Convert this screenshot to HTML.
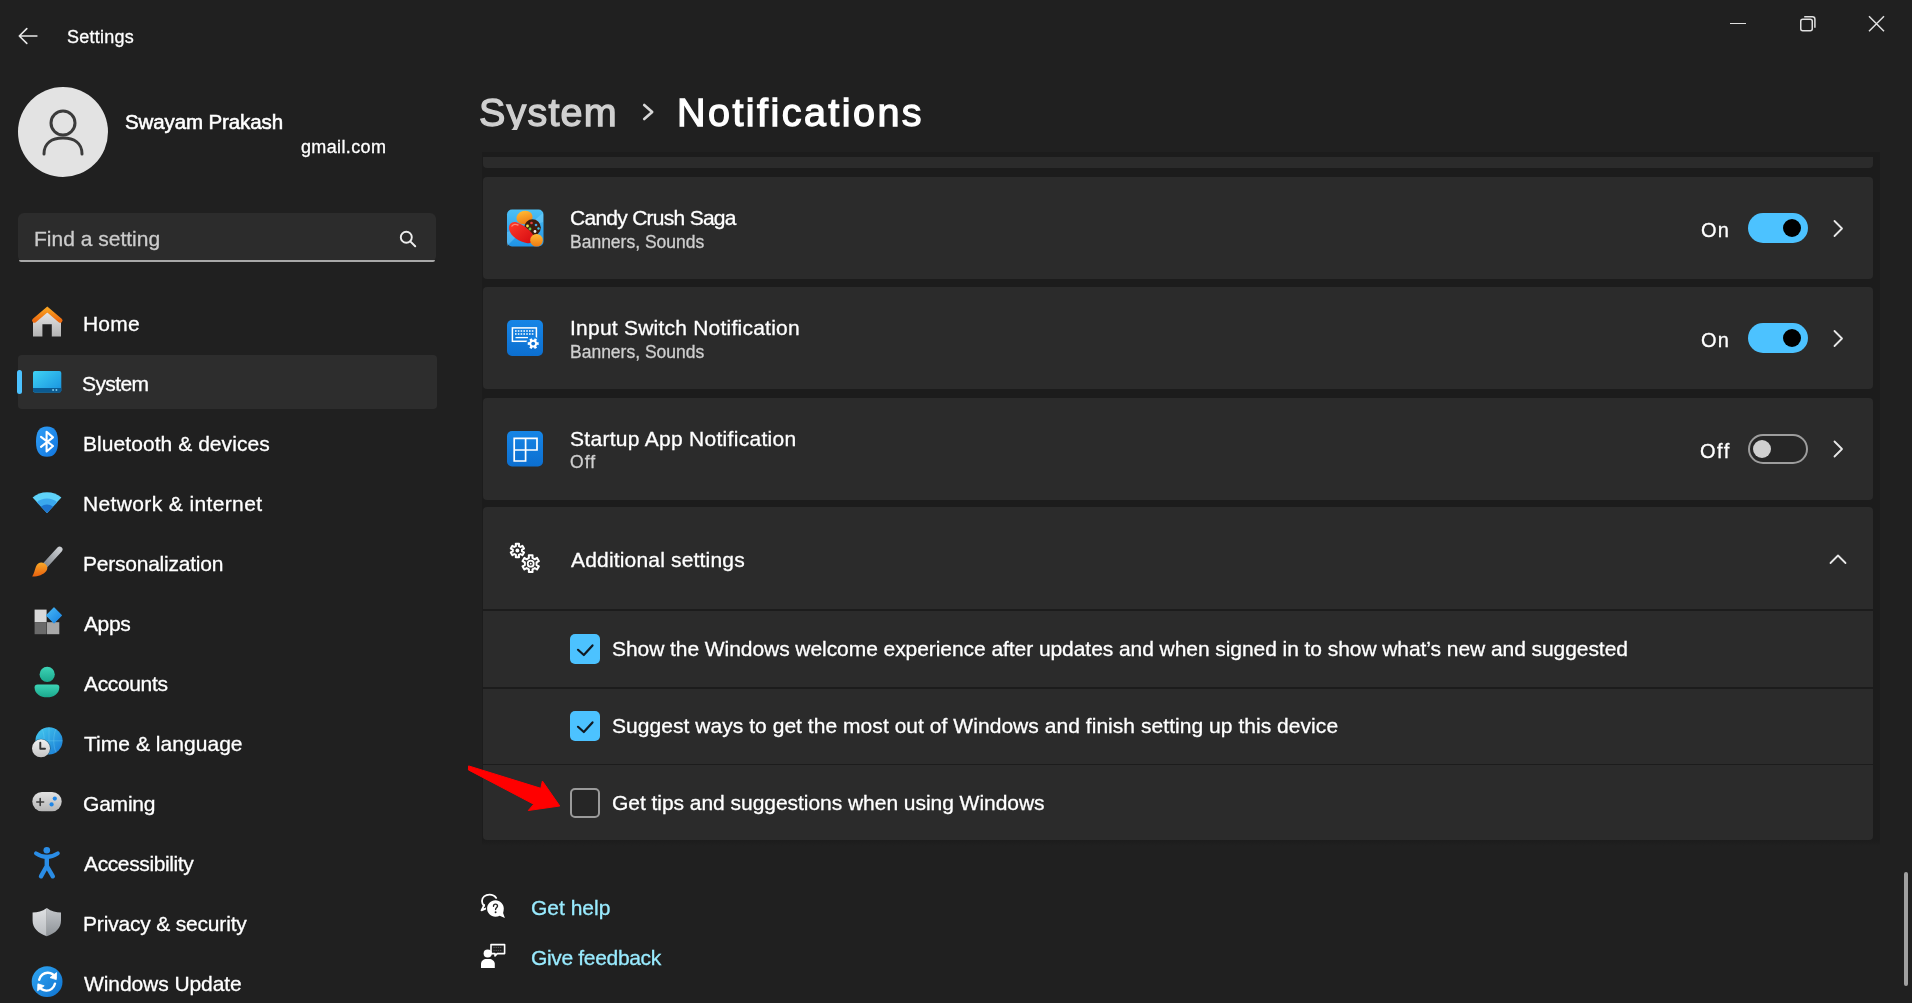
<!DOCTYPE html>
<html><head><meta charset="utf-8"><title>Settings</title>
<style>
html,body{margin:0;padding:0;}
body{width:1912px;height:1003px;overflow:hidden;background:#202020;position:relative;font-family:"Liberation Sans", sans-serif;}
.t{position:absolute;white-space:nowrap;line-height:1;will-change:transform;}
.r{position:absolute;}
</style></head><body>
<svg class="r" style="left:15px;top:24px;" width="26" height="24" viewBox="0 0 26 24"><path d="M4.3 12 H21.9 M4.3 12 L11.8 4.6 M4.3 12 L11.8 19.4" stroke="#e8e8e8" stroke-width="1.6" fill="none" stroke-linecap="round" stroke-linejoin="round"/></svg>
<div class="t" style="left:66.50px;top:27.76px;font-size:18px;color:#ffffff;letter-spacing:0.230px;-webkit-text-stroke:0.3px #ffffff;">Settings</div>
<div class="r" style="left:1730.4px;top:22.6px;width:16px;height:1.5px;background:#e0e0e0;"></div>
<svg class="r" style="left:1796px;top:12px;" width="24" height="24" viewBox="0 0 24 24"><rect x="4.75" y="7.25" width="11.5" height="11.5" rx="2" stroke="#e0e0e0" stroke-width="1.5" fill="none"/><path d="M8.2 4.8 H16.4 Q18.9 4.8 18.9 7.3 V15.8" stroke="#e0e0e0" stroke-width="1.5" fill="none"/></svg>
<svg class="r" style="left:1864px;top:12px;" width="24" height="24" viewBox="0 0 24 24"><path d="M5 4.2 L20 19.2 M20 4.2 L5 19.2" stroke="#e0e0e0" stroke-width="1.5" fill="none"/></svg>
<svg class="r" style="left:17px;top:86px;" width="92" height="92" viewBox="0 0 92 92"><circle cx="46" cy="46" r="45" fill="#e3e3e3"/><circle cx="46" cy="37" r="12" stroke="#3b3b3b" stroke-width="3" fill="none"/><path d="M27 68 C27 57 35 52 46 52 C57 52 65 57 65 68" stroke="#3b3b3b" stroke-width="3" fill="none" stroke-linecap="round"/></svg>
<div class="t" style="left:125.30px;top:111.85px;font-size:20.5px;color:#ffffff;letter-spacing:-0.110px;-webkit-text-stroke:0.55px #fff;">Swayam Prakash</div>
<div class="t" style="left:300.50px;top:137.76px;font-size:18px;color:#ffffff;letter-spacing:0.360px;-webkit-text-stroke:0.3px #ffffff;">gmail.com</div>
<div class="r" style="left:17.5px;top:213px;width:418px;height:48.5px;background:#2c2c2c;border-radius:6px;"></div>
<div class="r" style="left:18.5px;top:259.8px;width:416px;height:2.2px;background:#a8a8a8;border-radius:0 0 6px 6px;"></div>
<div class="t" style="left:34.40px;top:228.12px;font-size:21px;color:#cccccc;-webkit-text-stroke:0.3px #cccccc;">Find a setting</div>
<svg class="r" style="left:396px;top:228px;" width="24" height="24" viewBox="0 0 24 24"><circle cx="10.3" cy="9.3" r="5.5" stroke="#ededed" stroke-width="1.9" fill="none"/><path d="M14.3 13.4 L19.2 18.2" stroke="#ededed" stroke-width="2" stroke-linecap="round"/></svg>
<div class="r" style="left:17.5px;top:355px;width:419.5px;height:54px;background:#2d2d2d;border-radius:4px;"></div>
<div class="r" style="left:17.3px;top:369.7px;width:4.6px;height:24.2px;background:#4cc2ff;border-radius:3px;"></div>
<div class="t" style="left:82.80px;top:313.12px;font-size:21px;color:#ffffff;letter-spacing:0.200px;-webkit-text-stroke:0.3px #ffffff;">Home</div>
<div class="t" style="left:82.30px;top:373.12px;font-size:21px;color:#ffffff;letter-spacing:-0.600px;-webkit-text-stroke:0.3px #ffffff;">System</div>
<div class="t" style="left:82.50px;top:433.12px;font-size:21px;color:#ffffff;letter-spacing:0.060px;-webkit-text-stroke:0.3px #ffffff;">Bluetooth &amp; devices</div>
<div class="t" style="left:82.50px;top:493.12px;font-size:21px;color:#ffffff;letter-spacing:0.370px;-webkit-text-stroke:0.3px #ffffff;">Network &amp; internet</div>
<div class="t" style="left:82.50px;top:553.12px;font-size:21px;color:#ffffff;letter-spacing:-0.230px;-webkit-text-stroke:0.3px #ffffff;">Personalization</div>
<div class="t" style="left:84.00px;top:613.12px;font-size:21px;color:#ffffff;letter-spacing:-0.400px;-webkit-text-stroke:0.3px #ffffff;">Apps</div>
<div class="t" style="left:84.30px;top:673.12px;font-size:21px;color:#ffffff;letter-spacing:-0.350px;-webkit-text-stroke:0.3px #ffffff;">Accounts</div>
<div class="t" style="left:83.50px;top:733.12px;font-size:21px;color:#ffffff;letter-spacing:0.040px;-webkit-text-stroke:0.3px #ffffff;">Time &amp; language</div>
<div class="t" style="left:83.00px;top:793.12px;font-size:21px;color:#ffffff;letter-spacing:-0.200px;-webkit-text-stroke:0.3px #ffffff;">Gaming</div>
<div class="t" style="left:84.30px;top:853.12px;font-size:21px;color:#ffffff;letter-spacing:-0.380px;-webkit-text-stroke:0.3px #ffffff;">Accessibility</div>
<div class="t" style="left:82.50px;top:913.12px;font-size:21px;color:#ffffff;letter-spacing:-0.180px;-webkit-text-stroke:0.3px #ffffff;">Privacy &amp; security</div>
<div class="t" style="left:84.30px;top:973.12px;font-size:21px;color:#ffffff;letter-spacing:-0.080px;-webkit-text-stroke:0.3px #ffffff;">Windows Update</div>
<svg class="r" style="left:28px;top:300px;" width="40" height="703" viewBox="28 300 40 703">
<defs>
<linearGradient id="gRoof" x1="0" y1="0" x2="0" y2="1"><stop offset="0" stop-color="#f8a020"/><stop offset="1" stop-color="#ec6a10"/></linearGradient>
<linearGradient id="gWall" x1="0" y1="0" x2="0" y2="1"><stop offset="0" stop-color="#e9e9e9"/><stop offset="1" stop-color="#b3b3b3"/></linearGradient>
<linearGradient id="gSys" x1="0" y1="0" x2="1" y2="1"><stop offset="0" stop-color="#3fd3f5"/><stop offset="1" stop-color="#1790de"/></linearGradient>
<linearGradient id="gBt" x1="0" y1="0" x2="1" y2="1"><stop offset="0" stop-color="#2f9ff6"/><stop offset="1" stop-color="#1276e0"/></linearGradient>
<linearGradient id="gBrush" x1="1" y1="0" x2="0" y2="1"><stop offset="0" stop-color="#c9ccd0"/><stop offset="1" stop-color="#7f858b"/></linearGradient>
<linearGradient id="gTip" x1="0" y1="0" x2="0" y2="1"><stop offset="0" stop-color="#f8a928"/><stop offset="1" stop-color="#e8600e"/></linearGradient>
<linearGradient id="gAcc" x1="0" y1="0" x2="0" y2="1"><stop offset="0" stop-color="#3dd4b6"/><stop offset="1" stop-color="#1aa88c"/></linearGradient>
<linearGradient id="gGlobe" x1="0" y1="0" x2="1" y2="1"><stop offset="0" stop-color="#44ccf0"/><stop offset="1" stop-color="#1878d4"/></linearGradient>
<linearGradient id="gClock" x1="0" y1="0" x2="0" y2="1"><stop offset="0" stop-color="#f2f2f2"/><stop offset="1" stop-color="#c4c4c4"/></linearGradient>
<linearGradient id="gPad" x1="0" y1="0" x2="0" y2="1"><stop offset="0" stop-color="#e2e2e2"/><stop offset="1" stop-color="#b5b5b5"/></linearGradient>
<linearGradient id="gShL" x1="0" y1="0" x2="0" y2="1"><stop offset="0" stop-color="#dfe1e3"/><stop offset="1" stop-color="#b9bcc0"/></linearGradient>
<linearGradient id="gShR" x1="0" y1="0" x2="0" y2="1"><stop offset="0" stop-color="#c3c6ca"/><stop offset="1" stop-color="#8e9398"/></linearGradient>
<linearGradient id="gUpd" x1="0" y1="0" x2="1" y2="1"><stop offset="0" stop-color="#2fa6f2"/><stop offset="1" stop-color="#0f72d0"/></linearGradient>
<linearGradient id="gDia" x1="0" y1="0" x2="1" y2="1"><stop offset="0" stop-color="#48b9f7"/><stop offset="1" stop-color="#1680e0"/></linearGradient>
</defs>
<!-- home -->
<path d="M33 321.5 L47.3 310 L61 321.5 V336.6 H51.8 V324.3 H42.4 V336.6 H33 Z" fill="url(#gWall)"/>
<path d="M34.4 320.4 L47.3 309.4 L60.2 320.4" stroke="url(#gRoof)" stroke-width="4.6" fill="none" stroke-linecap="round" stroke-linejoin="miter"/>
<!-- system -->
<rect x="33" y="371" width="28.3" height="21.4" rx="2" fill="url(#gSys)"/>
<path d="M33 388 H61.3 V390.4 Q61.3 392.4 59.3 392.4 H35 Q33 392.4 33 390.4 Z" fill="#0b5b92"/>
<rect x="52.3" y="389.2" width="1.6" height="1.6" fill="#8fd8f5"/><rect x="55.6" y="389.2" width="1.6" height="1.6" fill="#8fd8f5"/>
<!-- bluetooth -->
<path d="M47 426.6 C54.5 426.6 58 431.5 58 441.7 C58 451.9 54.5 456.8 47 456.8 C39.5 456.8 36 451.9 36 441.7 C36 431.5 39.5 426.6 47 426.6 Z" fill="url(#gBt)"/>
<path d="M41 436.8 L53 446 L46.6 451.5 V431.8 L53 437.4 L41 446.8" stroke="#fff" stroke-width="2.1" fill="none" stroke-linecap="round" stroke-linejoin="round"/>
<!-- wifi -->
<path d="M32.6 497.5 A22 22 0 0 1 61.4 497.5 L47 513 Z" fill="#5fd3fa"/>
<path d="M36.8 502.2 A16 16 0 0 1 57.2 502.2 L47 513 Z" fill="#3aa8ee"/>
<path d="M41 506.6 A9.5 9.5 0 0 1 53 506.6 L47 513 Z" fill="#1c74cf"/>
<!-- brush -->
<path d="M59.6 549.5 L44.5 566" stroke="url(#gBrush)" stroke-width="5.8" stroke-linecap="round"/>
<path d="M44.5 563.5 C41.5 561.5 37.5 562.5 36 566.5 C34.8 570 34 573.5 32.2 576.6 C37.5 576.8 43.5 574.8 46.3 571 C48.2 568.3 47.6 565.5 44.5 563.5 Z" fill="url(#gTip)"/>
<!-- apps -->
<rect x="34.6" y="609.6" width="12" height="12.6" fill="#d9d9d9"/>
<rect x="34.6" y="622.2" width="12" height="12" fill="#6a6a6a"/>
<rect x="47" y="622.2" width="12.3" height="12" fill="#a8a8a8"/>
<path d="M54 607.9 L61.4 615.4 L54 622.9 L46.6 615.4 Z" fill="url(#gDia)" stroke="url(#gDia)" stroke-width="1.2" stroke-linejoin="round"/>
<!-- accounts -->
<circle cx="47.2" cy="674.4" r="7.6" fill="url(#gAcc)"/>
<path d="M37.7 684.6 H56.5 Q59.3 684.6 59.3 687.4 C59.3 693.6 53.6 697.3 47 697.3 C40.4 697.3 34.6 693.6 34.6 687.4 Q34.6 684.6 37.7 684.6 Z" fill="url(#gAcc)"/>
<!-- time -->
<circle cx="49" cy="740.8" r="13.6" fill="url(#gGlobe)"/>
<path d="M49 727.2 V754.4 M35.4 740.8 H62.6 M42 729 C45 735 45 746 42 752.6 M56 729 C53 735 53 746 56 752.6" stroke="#7fd9f6" stroke-width="0.6" fill="none" opacity="0.5"/>
<circle cx="41" cy="748.3" r="9.6" fill="#202020" opacity="0.45"/>
<circle cx="41" cy="748.3" r="9" fill="url(#gClock)"/>
<path d="M40.3 742.6 V748.8 H45" stroke="#333" stroke-width="1.9" fill="none" stroke-linecap="round" stroke-linejoin="round"/>
<!-- gaming -->
<rect x="32.3" y="792" width="29.4" height="19.2" rx="9.6" fill="url(#gPad)"/>
<path d="M36.8 802 H43.6 M40.2 798.6 V805.4" stroke="#3b3b3b" stroke-width="1.6" stroke-linecap="round"/>
<circle cx="54.8" cy="798.6" r="2.1" fill="#1f86e6"/><circle cx="51.6" cy="804.4" r="2.1" fill="#1f86e6"/>
<!-- accessibility -->
<circle cx="46.8" cy="850.3" r="3.3" fill="#2a8de6"/>
<path d="M36 853.3 Q46.8 860.5 57.8 853.3" stroke="#2a8de6" stroke-width="4" fill="none" stroke-linecap="round"/>
<path d="M46.8 857 V866 L41 876.3 M46.8 866 L52.8 876.3" stroke="#2a8de6" stroke-width="4.4" fill="none" stroke-linecap="round" stroke-linejoin="round"/>
<!-- privacy -->
<path d="M46.8 908 C42 911.4 37.7 912.5 32.6 912.6 V920.5 C32.6 928 38 933.2 46.8 936.2 Z" fill="url(#gShL)"/>
<path d="M46.8 908 C51.6 911.4 55.9 912.5 61 912.6 V920.5 C61 928 55.6 933.2 46.8 936.2 Z" fill="url(#gShR)"/>
<!-- windows update -->
<circle cx="47.1" cy="981.7" r="15.4" fill="url(#gUpd)"/>
<path d="M39.2 979.8 C40.2 975.3 44 972.6 48 972.8 C51.3 973 54 974.8 55.3 977.6" stroke="#fff" stroke-width="2.4" fill="none" stroke-linecap="round"/>
<path d="M56.6 972.6 L56.3 979.6 L50 977.6 Z" fill="#fff" stroke="#fff" stroke-width="0.8" stroke-linejoin="round"/>
<path d="M55 983.6 C54 988.1 50.2 990.8 46.2 990.6 C42.9 990.4 40.2 988.6 38.9 985.8" stroke="#fff" stroke-width="2.4" fill="none" stroke-linecap="round"/>
<path d="M37.6 990.8 L37.9 983.8 L44.2 985.8 Z" fill="#fff" stroke="#fff" stroke-width="0.8" stroke-linejoin="round"/>
</svg>
<div class="t" style="left:478.50px;top:93.26px;font-size:39.5px;color:#d0d0d0;letter-spacing:1.200px;-webkit-text-stroke:1.3px #d0d0d0;">System</div>
<svg class="r" style="left:636px;top:100px;" width="24" height="24" viewBox="0 0 24 24"><path d="M8.2 5 L16.2 12 L8.2 19" stroke="#d8d8d8" stroke-width="2.6" fill="none" stroke-linecap="round" stroke-linejoin="round"/></svg>
<div class="t" style="left:677.00px;top:93.26px;font-size:39.5px;color:#ffffff;letter-spacing:2.450px;-webkit-text-stroke:1.3px #fff;">Notifications</div>
<div class="r" style="left:482px;top:152px;width:1398px;height:688px;background:#1c1c1c;"></div>
<div class="r" style="left:482px;top:840px;width:1398px;height:6px;background:linear-gradient(#1c1c1c,#202020);"></div>
<div class="r" style="left:483px;top:150px;width:1390px;height:18px;background:#2b2b2b;border-radius:0 0 4px 4px;"></div>
<div class="r" style="left:470px;top:130px;width:1420px;height:22px;background:#202020;"></div>
<div class="r" style="left:483px;top:152px;width:1390px;height:4.8px;background:#1c1c1c;"></div>
<div class="r" style="left:483px;top:177px;width:1390px;height:102px;background:#2b2b2b;border-radius:4px;"></div>
<div class="r" style="left:483px;top:287px;width:1390px;height:102px;background:#2b2b2b;border-radius:4px;"></div>
<div class="r" style="left:483px;top:397.5px;width:1390px;height:102.10000000000002px;background:#2b2b2b;border-radius:4px;"></div>
<div class="r" style="left:483px;top:507px;width:1390px;height:333px;background:#2b2b2b;border-radius:4px;"></div>
<div class="r" style="left:483px;top:609.3px;width:1390px;height:1.6px;background:#1c1c1c;"></div>
<div class="r" style="left:483px;top:687.2px;width:1390px;height:1.6px;background:#1c1c1c;"></div>
<div class="r" style="left:483px;top:763.6px;width:1390px;height:1.6px;background:#1c1c1c;"></div>
<div class="t" style="left:569.50px;top:206.72px;font-size:21px;color:#ffffff;letter-spacing:-0.730px;-webkit-text-stroke:0.3px #ffffff;">Candy Crush Saga</div>
<div class="t" style="left:569.50px;top:233.89px;font-size:17.5px;color:#cfcfcf;-webkit-text-stroke:0.3px #cfcfcf;">Banners, Sounds</div>
<div class="t" style="left:569.50px;top:317.32px;font-size:21px;color:#ffffff;letter-spacing:0.230px;-webkit-text-stroke:0.3px #ffffff;">Input Switch Notification</div>
<div class="t" style="left:569.50px;top:343.99px;font-size:17.5px;color:#cfcfcf;-webkit-text-stroke:0.3px #cfcfcf;">Banners, Sounds</div>
<div class="t" style="left:569.50px;top:428.12px;font-size:21px;color:#ffffff;letter-spacing:0.290px;-webkit-text-stroke:0.3px #ffffff;">Startup App Notification</div>
<div class="t" style="left:569.50px;top:454.49px;font-size:17.5px;color:#cfcfcf;letter-spacing:1.100px;-webkit-text-stroke:0.3px #cfcfcf;">Off</div>
<div class="t" style="left:570.50px;top:548.82px;font-size:21px;color:#ffffff;letter-spacing:0.180px;-webkit-text-stroke:0.3px #ffffff;">Additional settings</div>
<svg class="r" style="left:500px;top:200px;" width="60" height="380" viewBox="500 200 60 380">
<defs>
<linearGradient id="gCC" x1="0" y1="0" x2="0" y2="1"><stop offset="0" stop-color="#4cc0f5"/><stop offset="1" stop-color="#1f93e6"/></linearGradient>
<linearGradient id="gBlue" x1="0" y1="0" x2="0" y2="1"><stop offset="0" stop-color="#1685e6"/><stop offset="1" stop-color="#0c6fd0"/></linearGradient>
<linearGradient id="gRed" x1="0" y1="0" x2="1" y2="1"><stop offset="0" stop-color="#ff3a2a"/><stop offset="1" stop-color="#d40a10"/></linearGradient>
<linearGradient id="gOr" x1="0" y1="0" x2="0" y2="1"><stop offset="0" stop-color="#ffb833"/><stop offset="1" stop-color="#ee7a12"/></linearGradient>
</defs>
<!-- candy crush -->
<rect x="507" y="209.5" width="36.5" height="37" rx="5" fill="url(#gCC)"/>
<path d="M507 246 L525 228 L507 232 Z M525 228 L543 213 L543 222 Z" fill="#8fdcff" opacity="0.35"/>
<ellipse cx="524.5" cy="217.5" rx="8.2" ry="6.6" fill="url(#gOr)" transform="rotate(-15 524.5 217.5)"/>
<circle cx="532.5" cy="227.5" r="8.3" fill="#3e1c0c"/>
<circle cx="527.5" cy="226" r="1.4" fill="#e8e04a"/><circle cx="531.5" cy="223" r="1.3" fill="#e04040"/><circle cx="536" cy="225" r="1.3" fill="#40a0e0"/>
<circle cx="530" cy="229" r="1.4" fill="#60d050"/><circle cx="535" cy="231.5" r="1.4" fill="#f0f0f0"/><circle cx="538.5" cy="228.5" r="1.2" fill="#40c0e0"/><circle cx="525.5" cy="230.5" r="1.3" fill="#e050c0"/>
<path d="M509.2 229.5 C508.2 224 512 221 517 222.5 C523 224.5 529 229.5 532.6 234 C535.6 238 533 244 527.5 243.2 C519.5 242 510.6 236.5 509.2 229.5 Z" fill="url(#gRed)"/>
<path d="M512 226 C513 224 516 224 518 225" stroke="#ff9a8a" stroke-width="1.4" fill="none" stroke-linecap="round" opacity="0.8"/>
<circle cx="536.5" cy="240.3" r="6.3" fill="url(#gOr)"/>
<!-- input switch -->
<rect x="507" y="320" width="36" height="36" rx="5" fill="url(#gBlue)"/>
<rect x="512.4" y="327.9" width="24" height="13.4" fill="none" stroke="#fff" stroke-width="1.5"/>
<path d="M515 331 H534 M515 334 H534" stroke="#fff" stroke-width="1.3" stroke-dasharray="1.6 1.2"/>
<path d="M515.5 337.6 H528" stroke="#fff" stroke-width="1.3"/>
<circle cx="533.2" cy="343.6" r="7" fill="url(#gBlue)"/>
<path d="M537.00 342.35 L538.65 342.29 L538.65 344.91 L537.00 344.85 L536.18 346.26 L537.05 347.66 L534.79 348.97 L534.02 347.52 L532.38 347.52 L531.61 348.97 L529.35 347.66 L530.22 346.26 L529.40 344.85 L527.75 344.91 L527.75 342.29 L529.40 342.35 L530.22 340.94 L529.35 339.54 L531.61 338.23 L532.38 339.68 L534.02 339.68 L534.79 338.23 L537.05 339.54 L536.18 340.94 Z" fill="#fff"/>
<circle cx="533.2" cy="343.6" r="1.9" fill="#0f74d6"/>
<!-- startup -->
<rect x="507" y="431" width="36" height="35.5" rx="5" fill="url(#gBlue)"/>
<path d="M514.2 438.4 H537 V450 H514.2 Z M525.6 438.4 V461 H514.2 V450" fill="none" stroke="#fff" stroke-width="1.7"/>
<!-- gears -->
<path d="M522.00 551.46 L524.02 552.46 L522.41 555.25 L520.53 554.01 L518.87 554.96 L519.01 557.21 L515.79 557.21 L515.93 554.96 L514.27 554.01 L512.39 555.25 L510.78 552.46 L512.80 551.46 L512.80 549.54 L510.78 548.54 L512.39 545.75 L514.27 546.99 L515.93 546.04 L515.79 543.79 L519.01 543.79 L518.87 546.04 L520.53 546.99 L522.41 545.75 L524.02 548.54 L522.00 549.54 Z" fill="none" stroke="#fff" stroke-width="2" stroke-linejoin="round"/>
<circle cx="517.4" cy="550.5" r="1.9" fill="#fff"/>
<path d="M536.55 565.05 L538.91 566.27 L537.03 569.52 L534.79 568.09 L532.46 569.44 L532.58 572.09 L528.82 572.09 L528.94 569.44 L526.61 568.09 L524.37 569.52 L522.49 566.27 L524.85 565.05 L524.85 562.35 L522.49 561.13 L524.37 557.88 L526.61 559.31 L528.94 557.96 L528.82 555.31 L532.58 555.31 L532.46 557.96 L534.79 559.31 L537.03 557.88 L538.91 561.13 L536.55 562.35 Z" fill="none" stroke="#fff" stroke-width="2" stroke-linejoin="round"/>
<circle cx="530.7" cy="563.7" r="3" fill="none" stroke="#fff" stroke-width="1.8"/>
<circle cx="530.7" cy="563.7" r="0.9" fill="#fff"/>
</svg>
<div class="t" style="left:1700.60px;top:219.57px;font-size:20px;color:#ffffff;letter-spacing:1.100px;-webkit-text-stroke:0.3px #ffffff;">On</div>
<div class="t" style="left:1700.60px;top:329.57px;font-size:20px;color:#ffffff;letter-spacing:1.100px;-webkit-text-stroke:0.3px #ffffff;">On</div>
<div class="t" style="left:1700.00px;top:440.87px;font-size:20px;color:#ffffff;letter-spacing:1.500px;-webkit-text-stroke:0.3px #ffffff;">Off</div>
<div class="r" style="left:1747.5px;top:212.8px;width:60.5px;height:30.4px;background:#4cc2ff;border-radius:16px;"></div>
<div class="r" style="left:1783px;top:219px;width:18px;height:18px;background:#000;border-radius:50%;"></div>
<div class="r" style="left:1747.5px;top:322.8px;width:60.5px;height:30.4px;background:#4cc2ff;border-radius:16px;"></div>
<div class="r" style="left:1783px;top:329px;width:18px;height:18px;background:#000;border-radius:50%;"></div>
<div class="r" style="left:1747.8px;top:433.8px;width:60px;height:30.3px;background:#262626;border-radius:16px;box-sizing:border-box;border:2px solid #9d9d9d;"></div>
<div class="r" style="left:1753px;top:440px;width:18px;height:18px;background:#cfcfcf;border-radius:50%;"></div>
<svg class="r" style="left:1826px;top:216px;" width="24" height="24" viewBox="0 0 24 24"><path d="M8.5 5.0 L16 12.5 L8.5 20.0" stroke="#e8e8e8" stroke-width="1.8" fill="none" stroke-linecap="round" stroke-linejoin="round"/></svg>
<svg class="r" style="left:1826px;top:326px;" width="24" height="24" viewBox="0 0 24 24"><path d="M8.5 5.0 L16 12.5 L8.5 20.0" stroke="#e8e8e8" stroke-width="1.8" fill="none" stroke-linecap="round" stroke-linejoin="round"/></svg>
<svg class="r" style="left:1826px;top:437px;" width="24" height="24" viewBox="0 0 24 24"><path d="M8.5 4.5 L16 12 L8.5 19.5" stroke="#e8e8e8" stroke-width="1.8" fill="none" stroke-linecap="round" stroke-linejoin="round"/></svg>
<svg class="r" style="left:1826px;top:547px;" width="24" height="24" viewBox="0 0 24 24"><path d="M4.5 16 L12 8.5 L19.5 16" stroke="#e8e8e8" stroke-width="1.8" fill="none" stroke-linecap="round" stroke-linejoin="round"/></svg>
<div class="r" style="left:569.8px;top:633.8px;width:30.3px;height:30.3px;background:#4cc2ff;border-radius:5px;"></div>
<svg class="r" style="left:569.8px;top:633.8px;" width="31" height="31" viewBox="0 0 31 31"><path d="M8 15.8 L13.8 21 L22.5 11.4" stroke="#111a22" stroke-width="2.2" fill="none" stroke-linecap="round" stroke-linejoin="round"/></svg>
<div class="r" style="left:569.8px;top:710.5px;width:30.3px;height:30.3px;background:#4cc2ff;border-radius:5px;"></div>
<svg class="r" style="left:569.8px;top:710.5px;" width="31" height="31" viewBox="0 0 31 31"><path d="M8 15.8 L13.8 21 L22.5 11.4" stroke="#111a22" stroke-width="2.2" fill="none" stroke-linecap="round" stroke-linejoin="round"/></svg>
<div class="r" style="left:569.8px;top:788px;width:30.3px;height:30.3px;background:#262626;border-radius:5px;box-sizing:border-box;border:2px solid #9a9a9a;"></div>
<div class="t" style="left:611.50px;top:637.82px;font-size:21px;color:#ffffff;letter-spacing:-0.063px;-webkit-text-stroke:0.3px #ffffff;">Show the Windows welcome experience after updates and when signed in to show what’s new and suggested</div>
<div class="t" style="left:611.50px;top:714.92px;font-size:21px;color:#ffffff;letter-spacing:0.046px;-webkit-text-stroke:0.3px #ffffff;">Suggest ways to get the most out of Windows and finish setting up this device</div>
<div class="t" style="left:611.50px;top:791.92px;font-size:21px;color:#ffffff;letter-spacing:-0.040px;-webkit-text-stroke:0.3px #ffffff;">Get tips and suggestions when using Windows</div>
<div class="t" style="left:530.50px;top:897.32px;font-size:21px;color:#99ebff;-webkit-text-stroke:0.3px #99ebff;">Get help</div>
<div class="t" style="left:530.50px;top:946.82px;font-size:21px;color:#99ebff;letter-spacing:-0.330px;-webkit-text-stroke:0.3px #99ebff;">Give feedback</div>
<svg class="r" style="left:475px;top:888px;" width="40" height="90" viewBox="475 888 40 90">
<path d="M484 905.8 C482.6 904.3 482 902.6 482 900.9 C482 897.3 485.3 894.6 489.5 894.6 C492.3 894.6 494.8 895.8 496.2 897.9" stroke="#fff" stroke-width="1.8" fill="none" stroke-linecap="round"/>
<path d="M484.2 905 L481.5 910.3 L486.8 908.2" stroke="#fff" stroke-width="1.8" fill="none" stroke-linecap="round" stroke-linejoin="round"/>
<path d="M495.4 900.3 C490.8 900.3 487.1 904 487.1 908.6 C487.1 913.2 490.8 916.8 495.4 916.8 C497 916.8 498.5 916.4 499.7 915.7 L504.9 917.9 L503.1 913 C503.5 911.6 503.8 910.1 503.8 908.6 C503.8 904 500 900.3 495.4 900.3 Z" fill="#fff" stroke="#202020" stroke-width="2.4" paint-order="stroke"/>
<path d="M493.5 906.2 C493.5 904.9 494.4 904.1 495.5 904.1 C496.7 904.1 497.5 904.9 497.5 906 C497.5 907.4 495.6 907.7 495.6 909.6" stroke="#222" stroke-width="1.4" fill="none" stroke-linecap="round"/>
<circle cx="495.6" cy="912.3" r="0.95" fill="#222"/>
<circle cx="487.7" cy="953.5" r="4.1" fill="#fff"/>
<path d="M481 968 V964 C481 961 483.5 959 486.5 959 H489 C492 959 494.8 961 494.8 964 V968 Z" fill="#fff"/>
<path d="M491 944.6 H504.6 V953.6 H497.2 L495 956 V953.6 H491 Z" fill="none" stroke="#fff" stroke-width="1.6" stroke-linejoin="round"/>
<path d="M493.4 947.4 H502.2 M493.4 950.4 H502.2" stroke="#fff" stroke-width="0.8" stroke-dasharray="1.3 0.9" opacity="0.35"/>
</svg>
<div class="r" style="left:1904.4px;top:872px;width:3.2px;height:114px;background:#a0a0a0;border-radius:2px;"></div>
<svg class="r" style="left:460px;top:760px;" width="110" height="60" viewBox="460 760 110 60"><polygon points="468.6,765.9 540.8,788.3 542.4,781 559.8,806 528.3,810.5 533.7,804.2 468.4,769.9" fill="#ff0000" stroke="#ff0000" stroke-width="1" stroke-linejoin="round"/></svg>
</body></html>
